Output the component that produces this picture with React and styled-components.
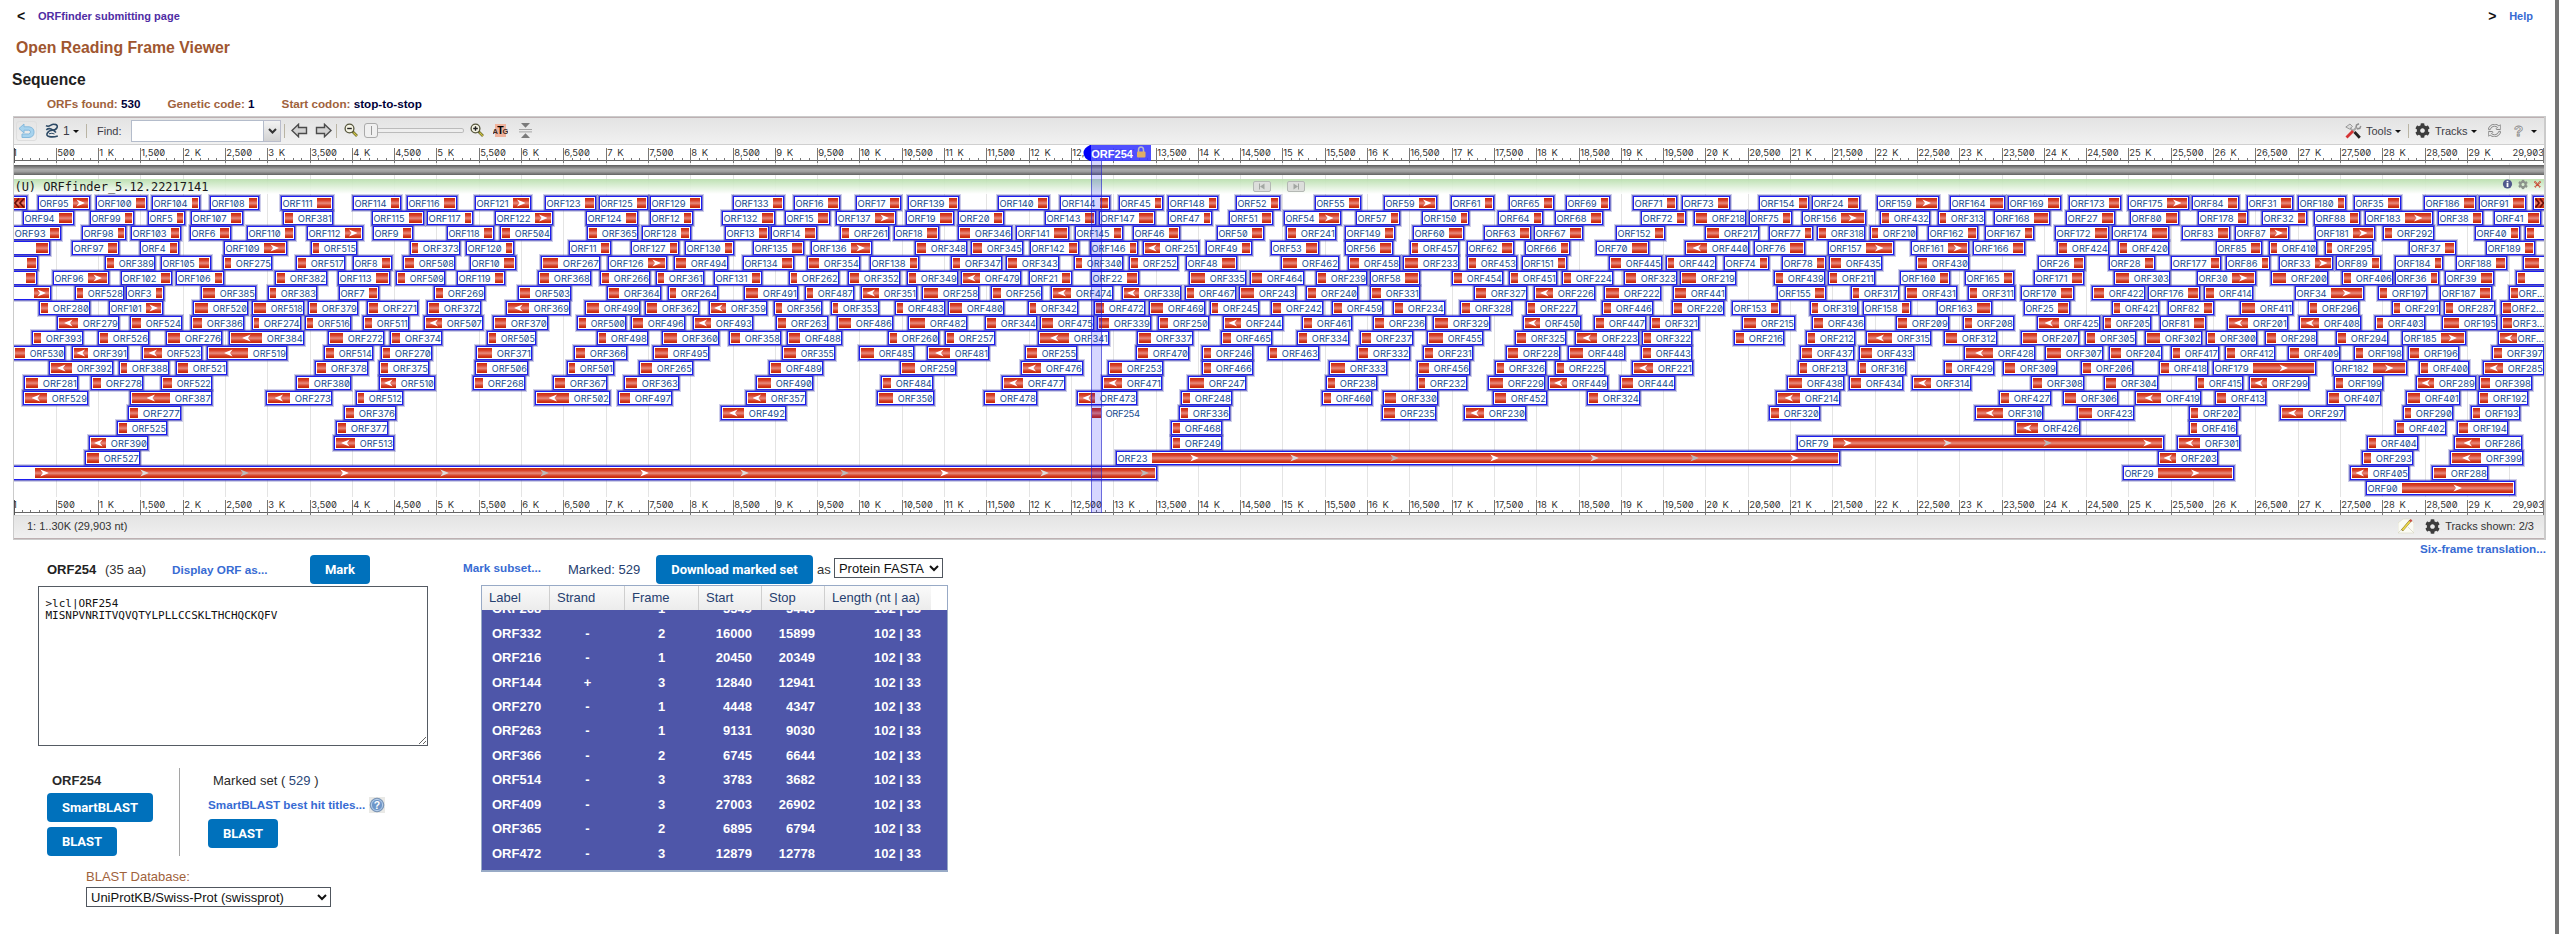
import React from "react";
import styled, { createGlobalStyle } from "styled-components";
import { FaCog, FaSyncAlt } from "react-icons/fa";

const GlobalStyle = createGlobalStyle`
  * { box-sizing: border-box; }
  html, body { margin: 0; padding: 0; background: #fff; overflow: hidden; }
  body { font-family: "Liberation Sans", Arial, sans-serif; font-size: 13px; color: #222; }
`;

/* ---------- ORF layout data ----------
   Each block covers one stretch of the sequence; its lines are the stacked rows.
   Entry: <kind><number> <frame left> <bar edge beside the label> <frame right>, in thirds of a pixel
   from the block origin.  + / > forward strand, - / < reverse strand (> and < carry an arrow). */
const BLOCKS = [
  {
    origin: 0,
    rows: `>95 115 218 270;+100 289 408 441;+104 457 576 601;+108 630 747 776;+111 843 951 999;+114 1058 1173 1204;+116 1221 1332 1371
+94 70 177 221;+99 269 375 401;+5 444 531 556;+107 573 693 728;-381 849 879 998;+115 1117 1227 1273;+117 1281 1395 1420
+93 40 150 182;+98 246 354 379;+103 393 513 544;+6 570 660 694;+110 742 855 885;>112 921 1035 1088;+9 1119 1209 1240
+_ 0 108 149;+97 215 324 358;+4 419 510 536;>109 672 792 861;-515 933 957 1071;-373 1230 1255 1380
+_ 0 81 113;-389 314 342 466;+105 482 597 634;-275 668 692 817;-517 889 917 1034;+8 1059 1146 1177;-508 1210 1242 1365
+_ 0 78 111;>96 160 264 326;+102 364 483 517;+106 528 645 672;-382 824 856 980;+113 1015 1128 1171;-509 1188 1216 1336
>_ 0 102 154;-528 224 250 371;+3 379 468 492;-385 603 645 767;-383 804 828 952;+7 1018 1107 1138
-280 116 144 269;>101 326 438 488;-520 578 624 744;-518 757 798 912;-379 925 951 1073;-271 1101 1134 1253
<279 170 234 357;-524 389 423 547;-386 572 606 731;-274 756 778 902;-516 914 940 1054;-511 1088 1116 1228
-393 96 123 248;-526 295 324 447;-276 497 540 665;<384 688 786 911;-272 985 1028 1152;-374 1170 1200 1326
-530 38 75 196;<391 215 264 383;<523 426 486 606;<519 620 744 861;-514 971 1001 1118;-270 1142 1170 1295
<392 146 216 340;-388 356 382 508;-521 527 563 682;-378 946 978 1104;-375 1136 1164 1287
-281 73 114 235;-278 274 303 429;-522 482 516 637;-380 889 927 1054;<510 1136 1188 1305
<529 70 141 265;<387 391 510 636;<273 799 870 997;-512 1067 1092 1210
-277 383 414 542;-376 1033 1062 1188
-525 351 381 501;-377 1009 1038 1165
<390 267 318 444;<513 1003 1065 1182
-527 254 297 420`,
  },
  {
    origin: 1275,
    rows: `>121 149 264 318;+123 360 480 513;+125 522 636 668;+129 675 795 830;+133 924 1044 1077;+16 1106 1209 1244
>122 211 330 383;+124 484 603 640;+12 674 777 803;+132 890 1011 1050;+15 1080 1179 1214;>137 1232 1350 1412
+118 66 177 208;-504 226 255 378;-365 487 516 639;+128 652 768 797;+13 901 1002 1031;+14 1039 1140 1175;-261 1244 1272 1392
+120 123 243 268;+11 432 528 557;+127 617 735 761;+130 780 900 927;+135 984 1101 1138;>136 1159 1278 1340
+10 135 237 272;-267 349 399 524;>126 549 669 727;-494 747 782 908;+134 953 1071 1106;-354 1147 1182 1305
+119 96 210 239;-368 340 372 497;-266 526 552 674;-361 692 717 836;+131 868 981 1012;-262 1093 1116 1241;-352 1270 1302 1425
-269 27 54 180;-503 280 315 437;-364 547 582 707;-264 728 753 878;-491 956 999 1118;-487 1141 1164 1288
-372 6 42 168;<369 242 312 434;-499 481 522 646;-362 661 696 821;<359 853 903 1026;-356 1046 1071 1192;-353 1217 1239 1362
<507 -4 52 174;-370 204 243 369;-500 457 483 604;-496 619 655 779;<493 803 858 984;-263 1054 1083 1209;-486 1236 1278 1404
-505 187 213 333;-498 517 543 668;-360 712 756 882;-358 911 945 1067;-488 1087 1125 1250
-371 153 201 321;-366 447 480 605;-495 685 729 852;-355 1072 1113 1231
-506 150 186 309;-501 426 450 567;-265 642 681 803;-489 1033 1068 1194
-268 144 174 300;-367 385 420 546;-363 597 636 761;-490 994 1038 1164
<502 331 432 554;-497 580 615 741;<357 964 1023 1144
<492 889 957 1083`,
  },
  {
    origin: 2550,
    rows: `+17 18 120 153;+139 175 297 327;+140 443 564 596;+144 630 750 781;+45 808 915 940;+148 955 1077 1104;+52 1157 1263 1290
+19 168 270 311;+20 325 432 461;+143 585 705 738;+147 748 867 914;+47 954 1062 1087;+51 1137 1236 1268
+18 132 231 266;-346 324 360 485;+141 498 612 656;+145 675 792 818;+46 850 957 989;+50 1102 1206 1242
-348 194 228 352;-345 364 396 518;+142 540 657 687;+146 720 840 864;<251 879 930 1047;+49 1069 1176 1205;+53 1264 1368 1408
+138 59 180 206;-347 304 330 455;-343 469 501 627;-340 671 696 818;-252 836 864 985;+48 1008 1116 1161
-349 172 198 323;<479 334 390 514;+21 536 636 667;+22 723 831 868;-335 1017 1066 1187;-464 1200 1236 1362
<351 34 87 202;-258 216 264 386;-256 424 453 575;<474 604 663 788;<338 817 867 992;-467 1006 1032 1157;-243 1168 1212 1338
-483 135 159 284;-480 295 336 461;-342 534 558 684;-472 732 762 884;-469 898 939 1064;-245 1080 1104 1226;-242 1263 1293 1419
-482 175 225 350;-344 406 438 561;-475 571 609 731;-339 742 777 902;-250 924 954 1077;<244 1119 1173 1299
-260 115 141 266;-257 284 312 434;<341 564 657 777;-337 862 903 1029;-465 1112 1143 1265
-485 27 72 193;<481 232 300 417;-255 526 561 680;-470 857 894 1018;-246 1056 1083 1208;-463 1254 1281 1406
-259 151 195 317;<476 514 573 699;-253 775 816 938;-466 1055 1083 1210
-484 93 123 248;<477 457 519 645;<471 756 816 936;-247 1015 1062 1187
-350 81 129 251;-478 403 435 561;<473 682 735 860;-248 994 1020 1145
-336 988 1014 1140
-468 964 990 1115
-249 964 990 1115`,
  },
  {
    origin: 3825,
    rows: `+55 119 222 258;>59 326 432 486;+61 528 630 656;+65 702 807 838;+69 874 978 1006;+71 1074 1176 1205;+73 1221 1329 1366
>54 28 132 199;+57 243 348 375;+150 441 558 582;+64 668 777 803;+68 840 948 984;+72 1098 1206 1232;-218 1257 1296 1413
-241 34 63 183;+149 210 330 359;+60 414 522 568;+63 627 735 767;+67 778 885 923;+152 1023 1140 1169;-217 1290 1332 1451
+56 210 315 354;-457 404 429 552;+62 577 681 717;+66 750 858 884;+70 964 1071 1121;<440 1229 1296 1422
-462 18 66 191;-458 219 252 375;-233 385 429 552;-453 577 603 726;+151 740 849 875;-445 1002 1038 1161;-442 1173 1197 1323
-239 124 153 276;+58 286 390 436;-454 530 561 685;-451 702 729 845;-224 862 888 1013;-323 1048 1083 1206;-219 1216 1263 1383
-240 93 123 248;-331 286 318 435;-327 596 633 757;<226 776 834 959;-222 988 1032 1157;-441 1193 1233 1352
-459 172 201 324;-234 355 384 509;-328 555 585 711;-227 754 780 906;-446 982 1008 1133;-220 1192 1221 1347
-461 81 111 231;-236 295 327 453;-329 475 519 644;<450 743 795 917;-447 958 987 1112;-321 1124 1155 1272
-334 66 96 221;-237 256 288 413;-455 457 504 624;-325 721 753 873;<223 901 966 1091;-322 1101 1128 1252
-332 247 279 404;-231 444 474 594;-228 694 729 855;-448 879 924 1050;-443 1098 1128 1252
-333 163 210 336;-456 425 462 584;-326 660 687 813;-225 841 867 989;<221 1072 1134 1253
-238 153 180 306;-232 425 450 575;-229 640 684 810;<449 820 876 998;-444 1035 1074 1199
-460 141 168 291;-330 325 363 489;-452 655 693 816;-324 936 969 1095
-235 322 360 483;<230 568 627 753`,
  },
  {
    origin: 5100,
    rows: `+154 178 297 326;+24 337 444 479;>159 532 648 717;+164 750 870 914;+169 923 1044 1083;+173 1106 1227 1262;>175 1284 1401 1468
+75 147 249 275;>156 306 423 497;-432 541 567 690;-313 714 738 855;+168 882 1002 1049;+27 1099 1206 1245;+80 1290 1398 1438
+77 208 315 340;-318 350 378 495;-210 509 534 652;+162 685 804 835;+167 855 975 1001;+172 1065 1185 1226;+174 1237 1356 1406
+76 162 270 314;>157 383 498 581;>161 633 744 808;+166 819 939 976;-424 1072 1101 1226;-420 1254 1281 1406
+74 73 180 206;+78 246 351 379;-435 388 423 546;-430 649 681 806;+26 1014 1122 1154;+28 1228 1335 1364
-439 223 249 375;-211 384 411 525;+160 600 720 749;+165 795 912 943;+171 1002 1116 1152;-303 1243 1287 1410
+155 232 345 377;-317 453 477 597;-431 616 651 771;-311 804 831 944;+170 964 1083 1123;-422 1177 1212 1335
+153 96 213 239;-319 329 354 474;+158 490 606 632;+163 712 831 875;+25 972 1074 1109;-421 1236 1260 1378
-215 127 168 285;-436 337 369 495;-209 589 621 746;-208 790 816 942;<425 1010 1077 1200;-205 1209 1233 1354
-216 102 132 252;-212 317 345 465;<315 498 576 692;-312 733 771 891;-207 964 1011 1137;-305 1155 1185 1308
-437 301 336 462;-433 478 516 642;<428 793 879 1004;-307 1034 1083 1208;-204 1228 1263 1386
-213 295 321 441;-316 473 498 618;-429 731 756 882;-309 910 945 1071;-206 1144 1173 1298
-438 262 306 432;-434 448 483 609;<314 635 693 813;-308 994 1026 1152;-304 1213 1248 1374
<214 227 300 420;-427 898 927 1053;-306 1088 1128 1253
-320 207 237 360;<310 825 909 1029;-423 1132 1176 1302
<426 946 1014 1140


>29 1269 1374 1602`,
  },
  {
    origin: 6375,
    rows: `+84 202 309 342;+31 367 468 503;+180 519 639 663;+35 687 789 828;+186 896 1017 1054;+91 1063 1164 1204
+178 220 339 369;+32 410 519 545;+88 567 675 705;>183 720 840 925;+38 938 1044 1073;+41 1106 1209 1247
+83 172 279 315;>87 330 435 491;>181 571 684 749;-292 773 801 926;+40 1050 1158 1184;-_ 1200 1228 1300
+85 274 378 412;-410 431 456 575;-295 599 621 743;+37 853 960 992;+189 1083 1200 1229
+177 138 258 289;+86 304 411 436;>33 462 570 623;+89 634 741 768;+184 810 930 955;+188 993 1113 1147;-_ 1195 1242 1300
>30 215 321 392;-200 439 483 608;-406 651 678 803;+36 810 918 943;+39 961 1068 1107;-_ 1174 1200 1300
+176 70 189 224;-414 237 267 384;>34 511 618 718;-197 760 786 906;+187 946 1065 1100;-… 1153 1179 1300
+82 130 237 266;-411 345 390 503;-296 548 576 702;-291 802 825 944;-287 958 984 1110;-2… 1129 1158 1300
+81 105 207 242;<201 307 369 489;<408 523 582 708;-403 749 774 900;-195 951 1002 1116;-3… 1127 1161 1300
-302 60 105 230;-300 243 270 396;-298 421 453 576;-294 633 663 789;>185 831 948 1022;<… 1118 1176 1300
-417 138 165 282;-412 300 330 449;-409 490 522 645;-198 688 714 833;-196 849 882 1001;-397 1102 1131 1257
-418 103 132 249;>179 264 384 573;>182 625 744 846;-400 881 909 1032;<285 1075 1134 1256
-415 213 237 354;<299 373 426 552;-199 627 654 774;<289 873 927 1053;-398 1063 1095 1221
<419 31 108 228;-413 271 303 423;-407 605 642 768;-401 844 885 1005;-192 1059 1089 1209
-202 193 219 345;<297 465 534 660;-290 834 858 984;-193 1039 1065 1185
-416 192 216 335;-402 811 837 963;-194 997 1029 1149
<301 157 225 345;-404 727 753 879;<286 988 1065 1190
<203 100 153 279;-293 712 738 864;<399 976 1068 1194
<405 676 729 852;-288 921 963 1088
>90 724 831 1170`,
  },
];

const LONG = [
  { row: 18, name: "", left: 0, edge: 105, right: 3471, arrows: 133 },
  { row: 17, name: "ORF23", left: 3348, edge: 3456, right: 5519, arrows: 3583 },
  { row: 16, name: "ORF79", left: 5391, edge: 5499, right: 6492, arrows: 5542 },
];

const FEATURES = BLOCKS.flatMap(({ origin, rows }) =>
  rows.split("\n").flatMap((line, row) =>
    line.trim() === ""
      ? []
      : line.split(";").map((entry) => {
          const [tag, l, m, r] = entry.trim().split(" ");
          const kind = tag[0];
          const id = tag.slice(1);
          return {
            row,
            forward: kind === "+" || kind === ">",
            arrow: kind === ">" || kind === "<",
            name: id === "_" ? "" : "ORF" + id.replace("…", "..."),
            cut: id.includes("…"),
            left: Math.round((+l + origin) / 3),
            edge: Math.round((+m + origin) / 3),
            right: Math.round((+r + origin) / 3),
          };
        })
  )
).sort((a, b) => a.row - b.row);

/* ---------- viewer drawing ---------- */
const Canvas = styled.svg`
  display: block;
  width: 2530px;
  height: 370px;
`;
const GlyphText = styled.text`
  font-family: Inter, "Liberation Sans", sans-serif;
  font-size: 9.4px;
  font-feature-settings: "zero" 1;
  word-spacing: 2px;
  fill: ${(p) => p.$fill || "#174c8f"};
`;
const TrackTitle = styled.text`
  font-family: "DejaVu Sans Mono", monospace;
  font-size: 12px;
  fill: #1a1a1a;
`;
const FlagText = styled.text`
  font-family: "Liberation Sans", Arial, sans-serif;
  font-size: 11px;
  font-weight: bold;
  fill: #fff;
`;

const Arrow = ({ x, y, back, fill = "#fff" }) => (
  <path
    transform={`translate(${x} ${y}) scale(${back ? -1 : 1} 1)`}
    d="M-4 -3.5L4 -.3V.3L-4 3.5L-1.5 0Z"
    fill={fill}
  />
);

const Frame = ({ left, right, top }) => (
  <>
    <rect x={left - 1.5} y={top - 1.5} width={right - left + 3} height={17} fill="none" stroke="#5050b4" strokeOpacity=".28" />
    <rect x={left - 0.5} y={top - 0.5} width={right - left + 1} height={15} fill="none" stroke="#4444b8" strokeOpacity=".7" />
    <rect x={left + 0.5} y={top + 0.5} width={right - left - 1} height={13} fill="#fff" stroke="#1c1cf0" />
  </>
);

const Feature = ({ f }) => {
  const top = 196 + f.row * 15;
  const x0 = f.forward ? f.edge : f.left + 2;
  const x1 = f.forward ? f.right - 2 : f.edge;
  const labelX = f.forward ? f.left + 1.4 : f.cut ? f.edge + 0.5 : f.edge + 4.8;
  const labelEnd = f.forward ? f.edge - 4.4 : f.right - 1.2;
  return (
    <g>
      <Frame left={f.left} right={f.right} top={top} />
      <rect x={x0} y={top + 2} width={x1 - x0} height={10} fill="url(#bar)" />
      {f.arrow && <Arrow x={(x0 + x1) / 2} y={top + 7} back={!f.forward} />}
      {f.name && (
        <GlyphText
          x={labelX}
          y={top + 11}
          textLength={f.cut ? undefined : labelEnd - labelX}
          lengthAdjust="spacingAndGlyphs"
        >
          {f.name}
        </GlyphText>
      )}
    </g>
  );
};

const LongFeature = ({ f }) => {
  const top = 196 + f.row * 15;
  const left = Math.round(f.left / 3);
  const edge = Math.round(f.edge / 3);
  const right = Math.round(f.right / 3);
  const marks = [];
  for (let x = f.arrows; x < f.right - 20; x += 300) marks.push(x / 3);
  return (
    <g>
      <Frame left={left} right={right} top={top} />
      <rect x={edge} y={top + 2} width={right - 2 - edge} height={10} fill="url(#bar)" />
      {marks.map((x, i) => <Arrow key={i} x={x} y={top + 7} fill={["#fff", "#ddd", "#bbb"][i % 3]} />)}
      {f.name && <GlyphText x={left + 1.5} y={top + 11} textLength="30">{f.name}</GlyphText>}
    </g>
  );
};

const nt = (n) => 14 + Math.floor((n - 1) * 0.0846);
const label = (n) => (n % 1000 === 0 ? `${n / 1000} K` : n.toLocaleString("en-US"));

const Ruler = ({ line, base, tickTop, tickBottom }) => {
  const majors = [];
  const minors = [];
  for (let n = 100; n < 29900; n += 100) (n % 500 ? minors : majors).push(n);
  return (
    <g>
      <rect x="14" y={line} width="2530" height="1" fill="#666" />
      {minors.map((n) => <rect key={n} x={nt(n)} y={line - 2} width="1" height="2" fill="#777" />)}
      {majors.map((n) => (
        <g key={n}>
          {n < 29500 && <rect x={nt(n)} y={tickTop} width="1" height={tickBottom - tickTop} fill="#777" />}
          {n < 29500 && <GlyphText $fill="#333" x={nt(n) + 1.3} y={base}>{label(n)}</GlyphText>}
        </g>
      ))}
      <rect x="14" y={tickTop} width="1" height={tickBottom - tickTop} fill="#555" />
      <GlyphText $fill="#333" x="13" y={base}>1</GlyphText>
      <GlyphText $fill="#333" x="2544" y={base} textAnchor="end">29,903</GlyphText>
      <rect x="2543" y={tickTop} width="1" height={tickBottom - tickTop} fill="#777" />
    </g>
  );
};

const NavButton = ({ x, back }) => (
  <g transform={`translate(${x} 181)`}>
    <rect x=".5" y=".5" width="17" height="10" rx="1.5" fill="#dcdedb" stroke="#b4b8b4" />
    <path d={back ? "M11.5 2.5V8.5L7 5.5Z" : "M6.5 2.5V8.5L11 5.5Z"} fill="#a2a6a2" />
    <rect x={back ? 6 : 11} y="2.5" width="1" height="6" fill="#a2a6a2" />
  </g>
);

const grid = [];
for (let n = 500; n < 29900; n += 500) grid.push(n);

const GenomeCanvas = () => (
  <Canvas viewBox="14 145 2530 370">
    <defs>
      <linearGradient id="bar" x1="0" y1="0" x2="0" y2="1">
        <stop offset="0" stopColor="#c92a0c" />
        <stop offset=".25" stopColor="#d8442c" />
        <stop offset=".52" stopColor="#e98a7b" />
        <stop offset=".8" stopColor="#d33a1e" />
        <stop offset="1" stopColor="#c62608" />
      </linearGradient>
      <linearGradient id="seq" x1="0" y1="0" x2="0" y2="1">
        <stop offset="0" stopColor="#5c5c5c" />
        <stop offset=".45" stopColor="#acacac" />
        <stop offset=".65" stopColor="#a0a0a0" />
        <stop offset="1" stopColor="#626262" />
      </linearGradient>
      <linearGradient id="head" x1="0" y1="0" x2="0" y2="1">
        <stop offset="0" stopColor="#b8deac" />
        <stop offset="1" stopColor="#fff" />
      </linearGradient>
    </defs>
    <rect x="14" y="145" width="2530" height="370" fill="#fff" />
    <Ruler line={160} base={156} tickTop={148} tickBottom={163} />
    {grid.map((n) => <rect key={n} x={nt(n)} y="163" width="1" height="334" fill="#e4e4e4" />)}
    <rect x="14" y="165" width="2530" height="10" fill="url(#seq)" />
    <rect x="14" y="179" width="2530" height="15" fill="url(#head)" opacity=".92" />
    <TrackTitle x="14.5" y="191" textLength="194">(U) ORFfinder_5.12.22217141</TrackTitle>
    <NavButton x={1253} back />
    <NavButton x={1287} />
    <g transform="translate(2507.5 184)">
      <circle r="4.6" fill="#50588c" />
      <rect x="-.9" y="-1" width="1.8" height="4" fill="#fff" />
      <rect x="-.9" y="-3.2" width="1.8" height="1.5" fill="#fff" />
    </g>
    <FaCog x="2518" y="179.5" width="10" height="10" size={10} color="#8b938b" />
    <path d="M2534.5 181.5L2540.5 187.5M2540.5 181.5L2534.5 187.5" stroke="#c8402c" strokeWidth="1.8" strokeDasharray="1.2 .5" />

    <Frame left={0} right={27} top={196} />
    <rect x="14" y="198" width="11" height="10" fill="url(#bar)" />
    <path d="M19 198.5L15 203L19 207.5M24 198.5L20 203L24 207.5" fill="none" stroke="#6d0f08" strokeWidth="1.7" />
    {FEATURES.map((f, i) => <Feature key={i} f={f} />)}
    {LONG.map((f) => <LongFeature key={f.row} f={f} />)}
    <Frame left={2533} right={2550} top={196} />
    <rect x="2535" y="198" width="9" height="10" fill="url(#bar)" />
    <path d="M2535.5 198.5L2539 203L2535.5 207.5M2540 198.5L2543.5 203L2540 207.5" fill="none" stroke="#6d0f08" strokeWidth="1.7" />

    <rect x="1104" y="406" width="38" height="14" fill="#fff" />
    <rect x="1092" y="408" width="9" height="10" fill="url(#bar)" />
    <GlyphText x="1105.5" y="417" textLength="34.5">ORF254</GlyphText>
    <Ruler line={512} base={508} tickTop={500} tickBottom={515} />

    <rect x="1091" y="161" width="11" height="352" fill="#0000ff" fillOpacity=".16" />
    <rect x="1091" y="161" width="1" height="352" fill="#2323c8" fillOpacity=".6" />
    <rect x="1101" y="161" width="1" height="352" fill="#2323c8" fillOpacity=".6" />
    <path d="M1091 145H1090Q1083.5 148 1083.5 153T1090 161H1091Z" fill="#0000f8" />
    <rect x="1091" y="145" width="60" height="16" fill="#3c3cff" fillOpacity=".9" />
    <FlagText x="1091.3" y="157.5">ORF254</FlagText>
    <path d="M1138.5 152.5V150Q1138.5 147 1141 147T1143.5 150V152.5" fill="none" stroke="#b9b9c4" strokeWidth="1.5" />
    <rect x="1137" y="151.5" width="8.5" height="6" rx="1" fill="#dfae66" />
  </Canvas>
);

/* ---------- page parts ---------- */
const Page = styled.div`
  display: flex;
  flex-direction: column;
  width: 2559px;
  height: 934px;
  border-right: 4px solid #757575;
  background: #fff;
`;
const TopBar = styled.header`
  display: flex;
  align-items: center;
  height: 32px;
  padding: 0 22px 0 17px;
  font-size: 11px;
  font-weight: bold;
`;
const Angle = styled.span`
  width: ${(p) => p.$w}px;
  margin-left: ${(p) => (p.$push ? "auto" : 0)};
  font-size: 14px;
  line-height: 14px;
  color: #111;
`;
const Link = styled.a`
  color: ${(p) => (p.$visited ? "#4f2da4" : "#376bd3")};
  font-weight: bold;
  font-size: ${(p) => p.$size || 11.7}px;
  white-space: nowrap;
  margin-bottom: ${(p) => p.$raise || 0}px;
`;
const Title = styled.h1`
  margin: 0;
  padding-left: 16px;
  font-size: 15.8px;
  line-height: 31px;
  color: #a0562f;
`;
const Subtitle = styled.h2`
  margin: 0;
  padding-left: 12px;
  font-size: 15.6px;
  line-height: 34px;
  color: #212121;
`;
const Meta = styled.div`
  display: flex;
  gap: 27px;
  height: 13px;
  margin-bottom: 6px;
  padding-left: 47px;
  font-size: 11.7px;
  line-height: 13px;
  font-weight: bold;
  color: #a0623c;
  b { color: #000038; }
`;
const Viewer = styled.section`
  width: 2533px;
  margin-left: 13px;
  flex: none;
  border: 1px solid #cbcbcb;
  border-right-width: 2px;
`;
const Toolbar = styled.div`
  display: flex;
  align-items: center;
  height: 28px;
  padding: 0 7px 1px 2px;
  border-top: 1px solid #bdb0b2;
  border-bottom: 1px solid #cfcfcf;
  background: linear-gradient(#e3e3e3, #f1f1f1);
  font-size: 11px;
  color: #3c3c46;
`;
const ToolItem = styled.span`
  display: flex;
  align-items: center;
  flex: none;
  width: ${(p) => p.$w}px;
  margin-left: ${(p) => p.$ml || 0}px;
  font-size: ${(p) => p.$size || 11}px;
  svg { flex: none; }
`;
const UndoBox = styled(ToolItem)`
  justify-content: center;
  height: 20px;
  border: 1px solid #dedede;
  border-radius: 3px;
`;
const Spacer = styled.span`
  flex: 1;
`;
const Divider = styled.i`
  flex: none;
  width: 1px;
  height: 14px;
  margin-left: ${(p) => p.$ml}px;
  background: #b9b4a4;
`;
const Caret = styled.i`
  flex: none;
  margin: 2px 0 0 ${(p) => p.$ml}px;
  border: 3px solid transparent;
  border-top-color: #111;
  border-bottom: 0;
`;
const FindBox = styled.input`
  flex: none;
  width: 133px;
  height: 22px;
  margin-left: ${(p) => p.$ml}px;
  border: 1px solid #b4bccb;
  background: #fff;
`;
const FindTrigger = styled.span`
  display: flex;
  align-items: center;
  justify-content: center;
  width: 17px;
  height: 22px;
  border: 1px solid #b9bccb;
  border-left: 0;
  background: linear-gradient(#f3f3f3, #d2d2d2);
`;
const SliderThumb = styled.span`
  flex: none;
  display: flex;
  justify-content: center;
  align-items: center;
  width: 14px;
  height: 15px;
  margin-left: 6px;
  border: 1px solid #aaa;
  border-radius: 3px;
  background: #f0f0f0;
  &::after { content: ""; width: 1px; height: 9px; background: #999; }
`;
const SliderRail = styled.span`
  width: 86px;
  height: 5px;
  border: 1px solid #bbb;
  border-left: 0;
  border-radius: 0 3px 3px 0;
  background: #eee;
`;
const StatusBar = styled.footer`
  display: flex;
  align-items: center;
  height: 24px;
  padding: 0 10px 2px 13px;
  border-top: 1px solid #d6d6d6;
  border-bottom: 1px solid #bdb0b2;
  background: linear-gradient(#e4e4e4, #f0f0f0);
  font-size: 11px;
  color: #333;
`;
const Lower = styled.main`
  display: flex;
  align-items: flex-start;
  flex: 1;
  padding-right: 9px;
`;
const SideLink = styled.div`
  padding-top: 1px;
`;
const DetailColumn = styled.section`
  width: 390px;
  margin: 15px 0 0 38px;
`;
const DetailHead = styled.div`
  display: flex;
  align-items: center;
  height: 29px;
  padding-left: 9px;
`;
const Button = styled.button`
  height: 29px;
  width: ${(p) => p.$w}px;
  flex: none;
  display: block;
  padding: 0;
  margin: ${(p) => p.$m || 0};
  border: 0;
  border-radius: 4px;
  background: #0071bc;
  color: #fff;
  font: bold 13px Roboto, sans-serif;
  white-space: nowrap;
`;
const Strong = styled.b`
  display: inline-block;
  width: ${(p) => p.$w}px;
`;
const Plain = styled.span`
  width: ${(p) => p.$w}px;
  margin-left: ${(p) => p.$ml || 0}px;
  color: ${(p) => p.$color || "#333"};
  white-space: nowrap;
`;
const SequenceBox = styled.textarea`
  display: block;
  width: 390px;
  height: 160px;
  margin-top: 2px;
  padding: 11px 6.5px;
  border: 1px solid #555b63;
  font: 11px/12px "DejaVu Sans Mono", monospace;
  color: #111;
  background: #fff;
`;
const BlastRow = styled.div`
  display: flex;
  margin: 22px 0 0 9px;
  height: 88px;
`;
const BlastSide = styled.div`
  width: ${(p) => p.$w}px;
  padding-left: ${(p) => p.$pl || 0}px;
  border-right: ${(p) => (p.$line ? "1px solid #a5a5a5" : "0")};
`;
const SideTitle = styled.div`
  height: 25px;
  padding-left: 5px;
  line-height: 25px;
  font-weight: ${(p) => (p.$bold ? "bold" : "normal")};
  color: #2a2a2a;
  em { font-style: normal; color: #2b4778; }
`;
const LinkRow = styled.div`
  display: flex;
  align-items: center;
  gap: 4px;
  height: 26px;
  padding-bottom: 3px;
`;
const DatabaseField = styled.label`
  display: block;
  margin: 13px 0 0 48px;
  line-height: 16px;
  color: #a0623c;
`;
const Select = styled.select`
  display: block;
  width: ${(p) => p.$w}px;
  height: 20px;
  margin: ${(p) => p.$m || 0};
  padding: 0;
  border: 1px solid #50565e;
  border-radius: 0;
  background: #fff;
  color: #111;
  font: 13px "Liberation Sans", Arial, sans-serif;
`;
const MarkedColumn = styled.section`
  margin: 15px 0 0 35px;
`;
const MarkedHead = styled.div`
  display: flex;
  align-items: center;
  height: 29px;
`;
const Table = styled.div`
  width: 467px;
  height: 287px;
  margin: 1px 0 0 18px;
  border: 1px solid #98aac6;
  border-bottom-width: 2px;
  overflow: hidden;
`;
const HeadRow = styled.div`
  display: flex;
  height: 24px;
  line-height: 24px;
  color: #26406f;
`;
const HeadCell = styled.span`
  width: ${(p) => p.$w}px;
  padding-left: 7px;
  border-right: ${(p) => (p.$last ? 0 : "1px solid #cfcfcf")};
  background: linear-gradient(#fafafa, #ececec);
  white-space: nowrap;
`;
const Rows = styled.div`
  height: 260px;
  overflow: hidden;
  background: #4e56a9;
`;
const Row = styled.div`
  display: grid;
  grid-template-columns: 68px 75px 73px 54px 63px 106px 1fr;
  height: 24.45px;
  line-height: 24px;
  color: #fff;
  font-weight: bold;
  &:first-child { margin-top: -12.8px; }
`;
const Cell = styled.span`
  text-align: ${(p) => p.$align};
  padding-left: ${(p) => (p.$align === "left" ? 10 : 0)}px;
`;

/* ---------- icons ---------- */
const UndoIcon = () => (
  <svg width="17" height="16" viewBox="0 0 17 16">
    <path d="M6 1L1 5.5L6 10V7.2H10.5Q12.5 7.2 12.5 9T10.5 11H4V14.5H11Q16 14 16 9.2T11 3.8H6Z" fill="#a7d3ee" stroke="#85b9dc" />
  </svg>
);
const LinkIcon = () => (
  <svg width="14" height="15" viewBox="0 0 14 15" fill="none" stroke="#2d4a66" strokeWidth="1.6">
    <path d="M1 2.6Q3 4 5.500 2.400T10 1.400Q13 2 12 4.600T7.500 7.200T2.400 10T4.500 13.600T12.800 13" />
    <path d="M1.300 6.800Q3.500 5 6 6T11 9.500" />
    <path d="M4 10.800Q7 9.600 9.500 11" strokeWidth="1" />
  </svg>
);
const BigArrow = ({ back }) => (
  <svg width="17" height="15" viewBox="0 0 17 15">
    <path
      transform={back ? "" : "matrix(-1 0 0 1 17 0)"}
      d="M1 7.5L7.5 1.3V4.5H15.5V10.5H7.5V13.7Z"
      fill="#d2d2d2"
      stroke="#4b4b4b"
      strokeWidth="1.4"
    />
  </svg>
);
const ZoomIcon = ({ plus }) => (
  <svg width="15" height="15" viewBox="0 0 15 15">
    <path d="M8.5 8.5L13 13" stroke="#6b6b2c" strokeWidth="2.6" />
    <path d="M9.5 9.5L12.8 12.8" stroke="#d3c544" strokeWidth="1.1" />
    <circle cx="5.5" cy="5.5" r="4.4" fill="#f5f4e4" stroke="#55553c" strokeWidth="1.3" />
    <path d={plus ? "M3.2 5.5H7.8M5.5 3.2V7.8" : "M3.2 5.5H7.8"} stroke="#222" strokeWidth="1.4" />
  </svg>
);
const CodonIcon = () => (
  <svg width="15" height="13" viewBox="0 0 15 13" fontFamily="Liberation Sans, sans-serif" fontWeight="bold">
    <rect x="2" y="0" width="11" height="13" fill="#efb29c" />
    <text x="-.5" y="10" fontSize="7.500" fill="#3c2a24">A</text>
    <text x="4.300" y="10" fontSize="10.500" fill="#000">T</text>
    <text x="9.600" y="10" fontSize="7.500" fill="#3c2a24">G</text>
  </svg>
);
const FlipIcon = () => (
  <svg width="13" height="15" viewBox="0 0 13 15">
    <path d="M2 0H11L6.5 4.8ZM2 15H11L6.5 10.2Z" fill="#7b7b7b" />
    <path d="M0 6.5H13M0 8.9H13" stroke="#a5a5a5" />
  </svg>
);
const ToolsIcon = () => (
  <svg width="17" height="16" viewBox="0 0 17 16" fill="none">
    <path d="M8 8L12 4" stroke="#a8a8a8" strokeWidth="2.2" />
    <path d="M11 4.500L11.500 2L14 .8M15.800 3L14.800 5.300L12 6" stroke="#8f8f8f" strokeWidth="1.500" />
    <path d="M5 5L9 9" stroke="#aaa" strokeWidth="2" />
    <path d="M.8 4L5 1L7.500 3.500L4.500 6Z" fill="#dcdcdc" stroke="#888" strokeWidth=".8" />
    <path d="M9.500 9L14.800 14.800" stroke="#222" strokeWidth="2.800" />
    <path d="M1.500 14.500L8 8" stroke="#d53434" strokeWidth="2.800" />
  </svg>
);
const HelpGlyph = styled.span`
  font: bold 15px "Liberation Sans", sans-serif;
  color: #eee;
  -webkit-text-stroke: 0.8px #8a8a8a;
`;
const NoteIcon = () => (
  <svg width="16" height="16" viewBox="0 0 16 16">
    <path d="M0 5L5 1H12L16 5V15H0Z" fill="#fbfbf4" stroke="#dcdcc8" strokeWidth=".7" />
    <path d="M0 15L6 9M16 15L10 9" stroke="#d5d5c5" strokeWidth=".8" />
    <path d="M4 12.5L12.5 2.5" stroke="#8c7a2a" strokeWidth="2.6" />
    <path d="M4.500 12L12 3.200" stroke="#eed94a" strokeWidth="1.700" />
    <path d="M12 3.500L13.500 1.700" stroke="#cc5148" strokeWidth="2.400" />
  </svg>
);
const HelpIcon = () => (
  <svg width="16" height="16" viewBox="0 0 16 16">
    <rect width="16" height="16" fill="#e9e9e6" />
    <circle cx="8" cy="8" r="6.8" fill="#6e96c8" stroke="#7c95b4" />
    <circle cx="8" cy="8" r="5.6" fill="none" stroke="#c9dcf1" strokeWidth=".8" />
    <text x="8" y="11.8" fontSize="10.5" fontWeight="bold" textAnchor="middle" fill="#fff" fontFamily="Liberation Sans, sans-serif">?</text>
  </svg>
);

const HEADERS = [["Label", 68], ["Strand", 75], ["Frame", 74], ["Start", 63], ["Stop", 63], ["Length (nt | aa)", 106]];
const ROWS = [
  ["ORF268", "-", 1, 5549, 5448],
  ["ORF332", "-", 2, 16000, 15899],
  ["ORF216", "-", 1, 20450, 20349],
  ["ORF144", "+", 3, 12840, 12941],
  ["ORF270", "-", 1, 4448, 4347],
  ["ORF263", "-", 1, 9131, 9030],
  ["ORF366", "-", 2, 6745, 6644],
  ["ORF514", "-", 3, 3783, 3682],
  ["ORF409", "-", 3, 27003, 26902],
  ["ORF365", "-", 2, 6895, 6794],
  ["ORF472", "-", 3, 12879, 12778],
];

export default function App() {
  return (
    <Page>
      <GlobalStyle />
      <TopBar>
        <Angle $w={21}>&lt;</Angle>
        <Link $visited $size={11}>ORFfinder submitting page</Link>
        <Angle $push $w={21}>&gt;</Angle>
        <Link $size={11}>Help</Link>
      </TopBar>
      <Title>Open Reading Frame Viewer</Title>
      <Subtitle>Sequence</Subtitle>
      <Meta>
        <span>ORFs found: <b>530</b></span>
        <span>Genetic code: <b>1</b></span>
        <span>Start codon: <b>stop-to-stop</b></span>
      </Meta>

      <Viewer>
        <Toolbar>
          <UndoBox $w={21}><UndoIcon /></UndoBox>
          <ToolItem $ml={8} $w={14}><LinkIcon /></ToolItem>
          <ToolItem $ml={4} $w={8} $size={12}>1</ToolItem>
          <Caret $ml={2} />
          <Divider $ml={7} />
          <ToolItem $ml={10} $w={26}>Find:</ToolItem>
          <FindBox $ml={8} />
          <FindTrigger>
            <svg width="9" height="6" viewBox="0 0 9 6"><path d="M1 1L4.5 4.5L8 1" fill="none" stroke="#333" strokeWidth="2" /></svg>
          </FindTrigger>
          <Divider $ml={3} />
          <ToolItem $ml={6} $w={17}><BigArrow back /></ToolItem>
          <ToolItem $ml={7} $w={17}><BigArrow /></ToolItem>
          <Divider $ml={4} />
          <ToolItem $ml={7} $w={14}><ZoomIcon /></ToolItem>
          <SliderThumb />
          <SliderRail />
          <ToolItem $ml={6} $w={15}><ZoomIcon plus /></ToolItem>
          <ToolItem $ml={8} $w={15}><CodonIcon /></ToolItem>
          <ToolItem $ml={11} $w={13}><FlipIcon /></ToolItem>
          <Spacer />
          <ToolItem $w={17}><ToolsIcon /></ToolItem>
          <ToolItem $ml={4} $w={27}>Tools</ToolItem>
          <Caret $ml={2} />
          <Divider $ml={7} />
          <ToolItem $ml={6} $w={16}><FaCog size={15} color="#3d3d3d" /></ToolItem>
          <ToolItem $ml={4} $w={34}>Tracks</ToolItem>
          <Caret $ml={2} />
          <ToolItem $ml={11} $w={15}><FaSyncAlt size={13} color="#e4e4e4" stroke="#777" strokeWidth={34} /></ToolItem>
          <ToolItem $ml={11} $w={11}><HelpGlyph>?</HelpGlyph></ToolItem>
          <Caret $ml={6} />
        </Toolbar>
        <GenomeCanvas />
        <StatusBar>
          1: 1..30K (29,903 nt)
          <Spacer />
          <NoteIcon />
          <ToolItem $ml={11} $w={20}><FaCog size={15} color="#3d3d3d" /></ToolItem>
          Tracks shown: 2/3
        </StatusBar>
      </Viewer>

      <Lower>
        <DetailColumn>
          <DetailHead>
            <Strong $w={58}>ORF254</Strong>
            <Plain $w={67}>(35 aa)</Plain>
            <Link>Display ORF as...</Link>
            <Spacer />
            <Button $w={60} $m="0 58px 0 0">Mark</Button>
          </DetailHead>
          <SequenceBox spellCheck={false} defaultValue={">lcl|ORF254\nMISNPVNRITVQVQTYLPLLCCSKLTHCHQCKQFV"} />
          <BlastRow>
            <BlastSide $w={133} $line>
              <SideTitle $bold>ORF254</SideTitle>
              <Button $w={106}>SmartBLAST</Button>
              <Button $w={70} $m="5px 0 0">BLAST</Button>
            </BlastSide>
            <BlastSide $w={240} $pl={28}>
              <SideTitle>Marked set ( <em>529</em> )</SideTitle>
              <LinkRow><Link>SmartBLAST best hit titles...</Link><HelpIcon /></LinkRow>
              <Button $w={70}>BLAST</Button>
            </BlastSide>
          </BlastRow>
          <DatabaseField>
            BLAST Database:
            <Select $w={245} $m="2px 0 0"><option>UniProtKB/Swiss-Prot (swissprot)</option></Select>
          </DatabaseField>
        </DetailColumn>
        <MarkedColumn>
          <MarkedHead>
            <Link $raise={5}>Mark subset...</Link>
            <Plain $ml={27} $w={88} $color="#26406f">Marked: 529</Plain>
            <Button $w={157}>Download marked set</Button>
            <Plain $ml={4} $w={17}>as</Plain>
            <Select $w={109} $m="0 0 3px"><option>Protein FASTA</option></Select>
          </MarkedHead>
          <Table>
            <HeadRow>
              {HEADERS.map(([t, w], i) => <HeadCell key={t} $w={w} $last={i === 5}>{t}</HeadCell>)}
            </HeadRow>
            <Rows>
              {ROWS.map(([name, strand, frame, start, stop]) => (
                <Row key={name}>
                  <Cell $align="left">{name}</Cell>
                  <Cell $align="center">{strand}</Cell>
                  <Cell $align="center">{frame}</Cell>
                  <Cell $align="right">{start}</Cell>
                  <Cell $align="right">{stop}</Cell>
                  <Cell $align="right">102 | 33</Cell>
                </Row>
              ))}
            </Rows>
          </Table>
        </MarkedColumn>
        <Spacer />
        <SideLink><Link>Six-frame translation...</Link></SideLink>
      </Lower>
    </Page>
  );
}
